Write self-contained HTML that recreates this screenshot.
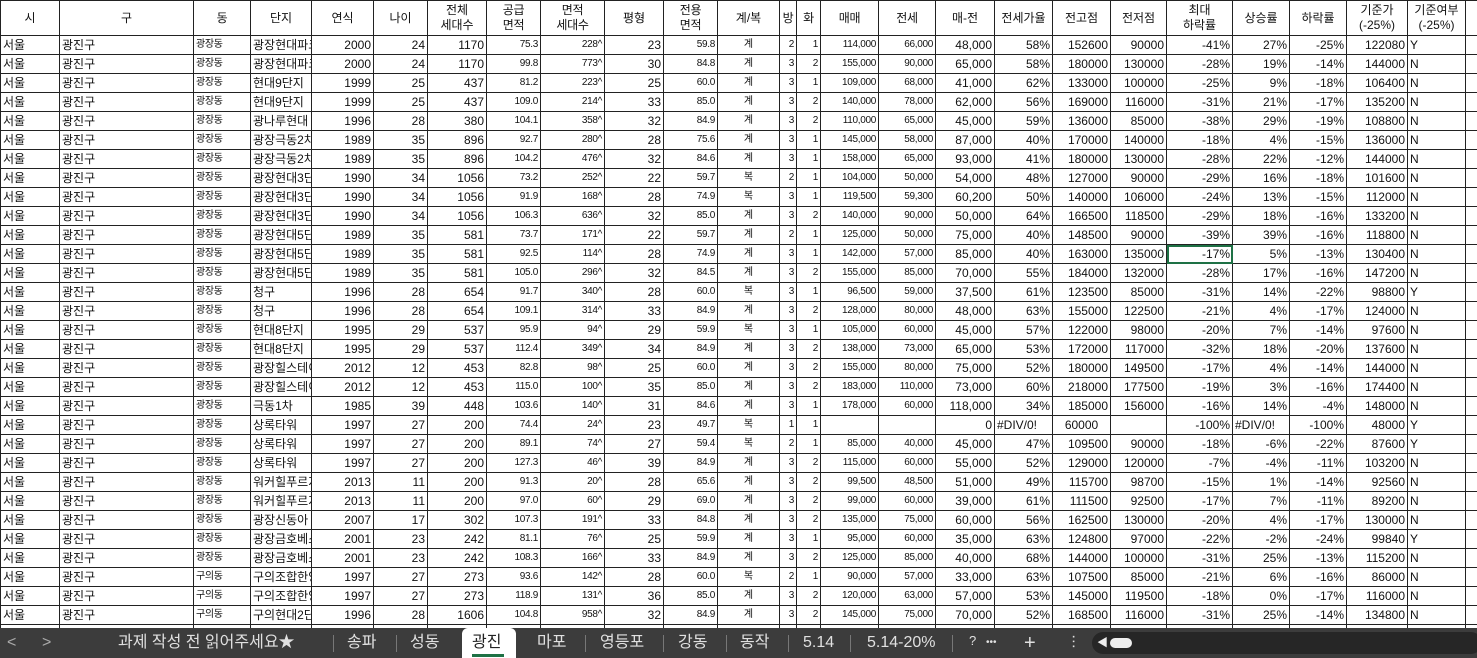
<!DOCTYPE html>
<html><head><meta charset="utf-8"><style>
html,body{margin:0;padding:0;width:1477px;height:658px;overflow:hidden;background:#fff;font-family:"Liberation Sans","Noto Sans CJK KR","NanumGothic",sans-serif;}
table{position:absolute;left:0;top:0;border-collapse:collapse;table-layout:fixed;width:1477px;}
td{border:1px solid #222;height:18px;padding:0 2px;font-size:12px;line-height:18px;white-space:nowrap;overflow:hidden;text-align:right;color:#111;box-sizing:border-box;vertical-align:middle;}
tr.h td{height:35px;text-align:center;font-size:12px;line-height:15px;white-space:normal;}
td:nth-child(1),td:nth-child(2),td:nth-child(3),td:nth-child(4),td:nth-child(25){text-align:left;}
td:nth-child(12){text-align:center;font-size:10px;}
td:nth-child(3),td:nth-child(8),td:nth-child(9),td:nth-child(11),td:nth-child(13),td:nth-child(14),td:nth-child(15),td:nth-child(16){font-size:10px;letter-spacing:-0.3px;}
td:nth-child(26){border-right:none;}
td.sel{outline:2px solid #1e7145;outline-offset:-2px;}
#bar{position:absolute;left:0;top:628px;width:1477px;height:30px;background:#3c3c3c;color:#e0e0e0;font-size:16px;}
#bar span{position:absolute;top:0;line-height:30px;height:30px;white-space:nowrap;}
#bar .sep{position:absolute;top:7px;width:1px;height:17px;background:#777;}
#act{position:absolute;left:462px;top:0;width:54px;height:30px;background:#fff;border-radius:6px 6px 0 0;}
#act span{color:#222;left:10px;}
#act i{position:absolute;left:10px;top:26px;width:32px;height:3px;background:#1e7145;}
#scr{position:absolute;left:1092px;top:4px;width:390px;height:22px;background:#262626;border-radius:11px;}
#thumb{position:absolute;left:18px;top:6px;width:22px;height:10px;background:#eee;border-radius:5px;}
</style></head><body>
<table>
<colgroup><col style="width:59px"><col style="width:134px"><col style="width:57px"><col style="width:61px"><col style="width:62px"><col style="width:54px"><col style="width:59px"><col style="width:54px"><col style="width:64px"><col style="width:59px"><col style="width:54px"><col style="width:62px"><col style="width:17px"><col style="width:24px"><col style="width:58px"><col style="width:57px"><col style="width:59px"><col style="width:58px"><col style="width:58px"><col style="width:56px"><col style="width:66px"><col style="width:57px"><col style="width:57px"><col style="width:61px"><col style="width:58px"><col style="width:12px"></colgroup>
<tr class="h"><td style="text-align:center">시<td style="text-align:center">구<td style="text-align:center;font-size:12px">동<td style="text-align:center">단지<td>연식<td>나이<td>전체<br>세대수<td style="font-size:12px">공급<br>면적<td style="font-size:12px">면적<br>세대수<td>평형<td style="font-size:12px">전용<br>면적<td>계/복<td style="font-size:12px">방<td style="font-size:12px">화<td style="font-size:12px">매매<td style="font-size:12px">전세<td>매-전<td>전세가율<td>전고점<td>전저점<td>최대<br>하락률<td>상승률<td>하락률<td>기준가<br>(-25%)<td style="text-align:center">기준여부<br>(-25%)<td></tr>
<tr><td>서울<td>광진구<td>광장동<td>광장현대파크빌<td>2000<td>24<td>1170<td>75.3<td>228^<td>23<td>59.8<td>계<td>2<td>1<td>114,000<td>66,000<td>48,000<td>58%<td>152600<td>90000<td>-41%<td>27%<td>-25%<td>122080<td>Y<td></tr>
<tr><td>서울<td>광진구<td>광장동<td>광장현대파크빌<td>2000<td>24<td>1170<td>99.8<td>773^<td>30<td>84.8<td>계<td>3<td>2<td>155,000<td>90,000<td>65,000<td>58%<td>180000<td>130000<td>-28%<td>19%<td>-14%<td>144000<td>N<td></tr>
<tr><td>서울<td>광진구<td>광장동<td>현대9단지<td>1999<td>25<td>437<td>81.2<td>223^<td>25<td>60.0<td>계<td>3<td>1<td>109,000<td>68,000<td>41,000<td>62%<td>133000<td>100000<td>-25%<td>9%<td>-18%<td>106400<td>N<td></tr>
<tr><td>서울<td>광진구<td>광장동<td>현대9단지<td>1999<td>25<td>437<td>109.0<td>214^<td>33<td>85.0<td>계<td>3<td>2<td>140,000<td>78,000<td>62,000<td>56%<td>169000<td>116000<td>-31%<td>21%<td>-17%<td>135200<td>N<td></tr>
<tr><td>서울<td>광진구<td>광장동<td>광나루현대<td>1996<td>28<td>380<td>104.1<td>358^<td>32<td>84.9<td>계<td>3<td>2<td>110,000<td>65,000<td>45,000<td>59%<td>136000<td>85000<td>-38%<td>29%<td>-19%<td>108800<td>N<td></tr>
<tr><td>서울<td>광진구<td>광장동<td>광장극동2차<td>1989<td>35<td>896<td>92.7<td>280^<td>28<td>75.6<td>계<td>3<td>1<td>145,000<td>58,000<td>87,000<td>40%<td>170000<td>140000<td>-18%<td>4%<td>-15%<td>136000<td>N<td></tr>
<tr><td>서울<td>광진구<td>광장동<td>광장극동2차<td>1989<td>35<td>896<td>104.2<td>476^<td>32<td>84.6<td>계<td>3<td>1<td>158,000<td>65,000<td>93,000<td>41%<td>180000<td>130000<td>-28%<td>22%<td>-12%<td>144000<td>N<td></tr>
<tr><td>서울<td>광진구<td>광장동<td>광장현대3단지<td>1990<td>34<td>1056<td>73.2<td>252^<td>22<td>59.7<td>복<td>2<td>1<td>104,000<td>50,000<td>54,000<td>48%<td>127000<td>90000<td>-29%<td>16%<td>-18%<td>101600<td>N<td></tr>
<tr><td>서울<td>광진구<td>광장동<td>광장현대3단지<td>1990<td>34<td>1056<td>91.9<td>168^<td>28<td>74.9<td>복<td>3<td>1<td>119,500<td>59,300<td>60,200<td>50%<td>140000<td>106000<td>-24%<td>13%<td>-15%<td>112000<td>N<td></tr>
<tr><td>서울<td>광진구<td>광장동<td>광장현대3단지<td>1990<td>34<td>1056<td>106.3<td>636^<td>32<td>85.0<td>계<td>3<td>2<td>140,000<td>90,000<td>50,000<td>64%<td>166500<td>118500<td>-29%<td>18%<td>-16%<td>133200<td>N<td></tr>
<tr><td>서울<td>광진구<td>광장동<td>광장현대5단지<td>1989<td>35<td>581<td>73.7<td>171^<td>22<td>59.7<td>계<td>2<td>1<td>125,000<td>50,000<td>75,000<td>40%<td>148500<td>90000<td>-39%<td>39%<td>-16%<td>118800<td>N<td></tr>
<tr><td>서울<td>광진구<td>광장동<td>광장현대5단지<td>1989<td>35<td>581<td>92.5<td>114^<td>28<td>74.9<td>계<td>3<td>1<td>142,000<td>57,000<td>85,000<td>40%<td>163000<td>135000<td class="sel">-17%<td>5%<td>-13%<td>130400<td>N<td></tr>
<tr><td>서울<td>광진구<td>광장동<td>광장현대5단지<td>1989<td>35<td>581<td>105.0<td>296^<td>32<td>84.5<td>계<td>3<td>2<td>155,000<td>85,000<td>70,000<td>55%<td>184000<td>132000<td>-28%<td>17%<td>-16%<td>147200<td>N<td></tr>
<tr><td>서울<td>광진구<td>광장동<td>청구<td>1996<td>28<td>654<td>91.7<td>340^<td>28<td>60.0<td>복<td>3<td>1<td>96,500<td>59,000<td>37,500<td>61%<td>123500<td>85000<td>-31%<td>14%<td>-22%<td>98800<td>Y<td></tr>
<tr><td>서울<td>광진구<td>광장동<td>청구<td>1996<td>28<td>654<td>109.1<td>314^<td>33<td>84.9<td>계<td>3<td>2<td>128,000<td>80,000<td>48,000<td>63%<td>155000<td>122500<td>-21%<td>4%<td>-17%<td>124000<td>N<td></tr>
<tr><td>서울<td>광진구<td>광장동<td>현대8단지<td>1995<td>29<td>537<td>95.9<td>94^<td>29<td>59.9<td>복<td>3<td>1<td>105,000<td>60,000<td>45,000<td>57%<td>122000<td>98000<td>-20%<td>7%<td>-14%<td>97600<td>N<td></tr>
<tr><td>서울<td>광진구<td>광장동<td>현대8단지<td>1995<td>29<td>537<td>112.4<td>349^<td>34<td>84.9<td>계<td>3<td>2<td>138,000<td>73,000<td>65,000<td>53%<td>172000<td>117000<td>-32%<td>18%<td>-20%<td>137600<td>N<td></tr>
<tr><td>서울<td>광진구<td>광장동<td>광장힐스테이트<td>2012<td>12<td>453<td>82.8<td>98^<td>25<td>60.0<td>계<td>3<td>2<td>155,000<td>80,000<td>75,000<td>52%<td>180000<td>149500<td>-17%<td>4%<td>-14%<td>144000<td>N<td></tr>
<tr><td>서울<td>광진구<td>광장동<td>광장힐스테이트<td>2012<td>12<td>453<td>115.0<td>100^<td>35<td>85.0<td>계<td>3<td>2<td>183,000<td>110,000<td>73,000<td>60%<td>218000<td>177500<td>-19%<td>3%<td>-16%<td>174400<td>N<td></tr>
<tr><td>서울<td>광진구<td>광장동<td>극동1차<td>1985<td>39<td>448<td>103.6<td>140^<td>31<td>84.6<td>계<td>3<td>1<td>178,000<td>60,000<td>118,000<td>34%<td>185000<td>156000<td>-16%<td>14%<td>-4%<td>148000<td>N<td></tr>
<tr><td>서울<td>광진구<td>광장동<td>상록타워<td>1997<td>27<td>200<td>74.4<td>24^<td>23<td>49.7<td>복<td>1<td>1<td><td><td>0<td style="text-align:left">#DIV/0!<td style="text-align:center">60000<td><td>-100%<td style="text-align:left">#DIV/0!<td>-100%<td>48000<td>Y<td></tr>
<tr><td>서울<td>광진구<td>광장동<td>상록타워<td>1997<td>27<td>200<td>89.1<td>74^<td>27<td>59.4<td>복<td>2<td>1<td>85,000<td>40,000<td>45,000<td>47%<td>109500<td>90000<td>-18%<td>-6%<td>-22%<td>87600<td>Y<td></tr>
<tr><td>서울<td>광진구<td>광장동<td>상록타워<td>1997<td>27<td>200<td>127.3<td>46^<td>39<td>84.9<td>계<td>3<td>2<td>115,000<td>60,000<td>55,000<td>52%<td>129000<td>120000<td>-7%<td>-4%<td>-11%<td>103200<td>N<td></tr>
<tr><td>서울<td>광진구<td>광장동<td>워커힐푸르지오<td>2013<td>11<td>200<td>91.3<td>20^<td>28<td>65.6<td>계<td>3<td>2<td>99,500<td>48,500<td>51,000<td>49%<td>115700<td>98700<td>-15%<td>1%<td>-14%<td>92560<td>N<td></tr>
<tr><td>서울<td>광진구<td>광장동<td>워커힐푸르지오<td>2013<td>11<td>200<td>97.0<td>60^<td>29<td>69.0<td>계<td>3<td>2<td>99,000<td>60,000<td>39,000<td>61%<td>111500<td>92500<td>-17%<td>7%<td>-11%<td>89200<td>N<td></tr>
<tr><td>서울<td>광진구<td>광장동<td>광장신동아<td>2007<td>17<td>302<td>107.3<td>191^<td>33<td>84.8<td>계<td>3<td>2<td>135,000<td>75,000<td>60,000<td>56%<td>162500<td>130000<td>-20%<td>4%<td>-17%<td>130000<td>N<td></tr>
<tr><td>서울<td>광진구<td>광장동<td>광장금호베스트빌<td>2001<td>23<td>242<td>81.1<td>76^<td>25<td>59.9<td>계<td>3<td>1<td>95,000<td>60,000<td>35,000<td>63%<td>124800<td>97000<td>-22%<td>-2%<td>-24%<td>99840<td>Y<td></tr>
<tr><td>서울<td>광진구<td>광장동<td>광장금호베스트빌<td>2001<td>23<td>242<td>108.3<td>166^<td>33<td>84.9<td>계<td>3<td>2<td>125,000<td>85,000<td>40,000<td>68%<td>144000<td>100000<td>-31%<td>25%<td>-13%<td>115200<td>N<td></tr>
<tr><td>서울<td>광진구<td>구의동<td>구의조합한양<td>1997<td>27<td>273<td>93.6<td>142^<td>28<td>60.0<td>복<td>2<td>1<td>90,000<td>57,000<td>33,000<td>63%<td>107500<td>85000<td>-21%<td>6%<td>-16%<td>86000<td>N<td></tr>
<tr><td>서울<td>광진구<td>구의동<td>구의조합한양<td>1997<td>27<td>273<td>118.9<td>131^<td>36<td>85.0<td>계<td>3<td>2<td>120,000<td>63,000<td>57,000<td>53%<td>145000<td>119500<td>-18%<td>0%<td>-17%<td>116000<td>N<td></tr>
<tr><td>서울<td>광진구<td>구의동<td>구의현대2단지<td>1996<td>28<td>1606<td>104.8<td>958^<td>32<td>84.9<td>계<td>3<td>2<td>145,000<td>75,000<td>70,000<td>52%<td>168500<td>116000<td>-31%<td>25%<td>-14%<td>134800<td>N<td></tr>
<tr><td><td><td><td><td><td><td><td><td><td><td><td><td><td><td><td><td><td><td><td><td><td><td><td><td><td></tr>
</table>
<div id="bar">
<span style="left:7px;color:#aaa">&lt;</span><span style="left:42px;color:#aaa">&gt;</span>
<span style="left:118px">과제 작성 전 읽어주세요★</span><div class="sep" style="left:333px"></div>
<span style="left:347px">송파</span><div class="sep" style="left:396px"></div>
<span style="left:410px">성동</span>
<div id="act"><span>광진</span><i></i></div>
<span style="left:537px">마포</span><div class="sep" style="left:585px"></div>
<span style="left:600px">영등포</span><div class="sep" style="left:663px"></div>
<span style="left:678px">강동</span><div class="sep" style="left:726px"></div>
<span style="left:740px">동작</span><div class="sep" style="left:788px"></div>
<span style="left:803px">5.14</span><div class="sep" style="left:850px"></div>
<span style="left:867px">5.14-20%</span><div class="sep" style="left:952px"></div>
<span style="left:969px;font-size:13px;line-height:26px">?</span><span style="left:986px;font-size:10px">•••</span>
<span style="left:1024px;font-size:20px">+</span><span style="left:1066px;font-size:16px">⋮</span>
<div id="scr"><span style="left:5px;font-size:11px;color:#eee;line-height:22px;height:22px">◀</span><div id="thumb"></div></div>
</div>
</body></html>
